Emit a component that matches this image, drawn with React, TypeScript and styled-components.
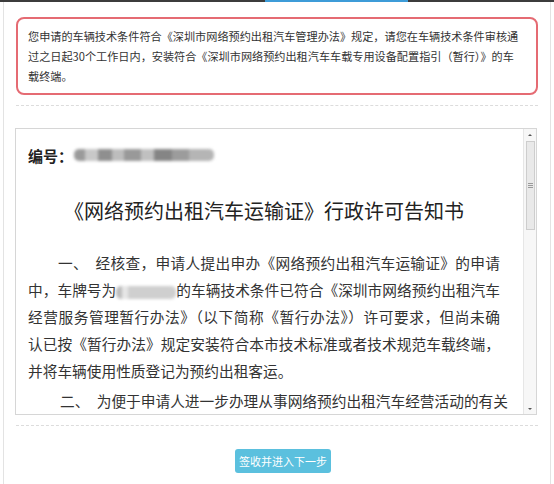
import React from "react";
import styled, { createGlobalStyle } from "styled-components";

const GlobalStyle = createGlobalStyle`
  body {
    margin: 0;
    background: #fff;
    font-family: "Noto Sans CJK SC", "Noto Sans", sans-serif;
    color: #333;
  }
`;

const Page = styled.div`
  width: 554px;
  height: 484px;
  overflow: hidden;
`;

const TopBar = styled.div`
  height: 2px;
  background: #3c3c3c;
  display: flex;
`;

const ActiveTab = styled.div`
  margin-left: 265px;
  width: 143px;
  background: #3d9cd8;
`;

const Frame = styled.div`
  margin: 0 3px;
  height: 482px;
  border-left: 1px solid #e3e3e3;
  border-right: 1px solid #e3e3e3;
  padding: 15px 12px 0;
  box-sizing: border-box;
`;

const Alert = styled.div`
  border: 2px solid #e56b73;
  border-radius: 8px;
  padding: 7px 10px;
  font-size: 11.15px;
  line-height: 20px;
  color: #333;
`;

const Line = styled.div`
  white-space: nowrap;
`;

const Divider = styled.div<{ $gap: number }>`
  margin-top: ${(p) => p.$gap}px;
  border-top: 1px dashed #dcdcdc;
`;

const DocBox = styled.div`
  margin: 22px 1px 0 -1px;
  height: 287px;
  border: 1px solid #d6d6d6;
  display: flex;
  box-sizing: border-box;
`;

const DocContent = styled.div`
  flex: 1;
  overflow: hidden;
  padding: 16px 0 0 12px;
`;

const NumberRow = styled.div`
  height: 20px;
  display: flex;
  align-items: center;
  font-family: "Liberation Serif", "Noto Sans CJK SC", serif;
  font-weight: 700;
  font-size: 15px;
  color: #222;
`;

const Blurred = styled.span<{ $w: number }>`
  display: inline-block;
  width: ${(p) => p.$w}px;
  height: 11px;
  border-radius: 5px;
  filter: blur(1.6px);
  vertical-align: middle;
`;

const NumberBlur = styled(Blurred)`
  margin-left: 1px;
  height: 12px;
  background: linear-gradient(
    90deg,
    #9a9a9a 0 8%,
    #c8c8c8 8% 17%,
    #8f8f8f 17% 27%,
    #bdbdbd 27% 36%,
    #999 36% 48%,
    #c0c0c0 48% 57%,
    #858585 57% 70%,
    #9c9c9c 70% 82%,
    #b5b5b5 82% 100%
  );
`;

const PlateBlur = styled(Blurred)`
  height: 13px;
  background: linear-gradient(90deg, #bdbdbd 0 10%, #e6e6e6 10% 20%, #cfcfcf 20% 100%);
`;

const Title = styled.div`
  margin-top: 32px;
  width: 472px;
  text-align: center;
  font-family: "Liberation Serif", "Noto Sans CJK SC", serif;
  font-size: 20px;
  line-height: 30px;
  color: #222;
`;

const Para = styled.div<{ $gap: number }>`
  margin-top: ${(p) => p.$gap}px;
  width: 472px;
  font-size: 14.7px;
  line-height: 27px;
  color: #333;
`;

const JLine = styled.div<{ $indent?: number; $last?: boolean }>`
  white-space: nowrap;
  text-indent: ${(p) => p.$indent ?? 0}px;
  text-align: ${(p) => (p.$last ? "left" : "justify")};
  text-align-last: ${(p) => (p.$last ? "left" : "justify")};
`;

const Scrollbar = styled.div`
  width: 12px;
  border-left: 1px solid #e6e6e6;
  background: #f7f7f7;
  display: flex;
  flex-direction: column;
  align-items: center;
`;

const Arrow = styled.div<{ $down?: boolean }>`
  height: 11px;
  display: flex;
  align-items: center;
  justify-content: center;
  &::before {
    content: "";
    border-left: 2px solid transparent;
    border-right: 2px solid transparent;
    ${(p) => (p.$down ? "border-top: 2px solid #555;" : "border-bottom: 2px solid #555;")}
  }
`;

const Thumb = styled.div`
  margin-top: 1px;
  width: 9px;
  height: 89px;
  background: #e9e9e9;
  border: 1px solid #cdcdcd;
  box-sizing: border-box;
  display: flex;
  flex-direction: column;
  align-items: center;
  justify-content: center;
  gap: 1px;
`;

const Grip = styled.div`
  width: 5px;
  height: 1px;
  background: #9a9a9a;
`;

const Track = styled.div`
  flex: 1;
`;

const Actions = styled.div`
  margin-top: 23px;
  padding-left: 12px;
  display: flex;
  justify-content: center;
`;

const Button = styled.button`
  width: 96px;
  height: 24px;
  border: none;
  border-radius: 3px;
  background: #5bc0de;
  color: #fff;
  font-family: "Noto Sans CJK SC", sans-serif;
  font-size: 11px;
  padding: 0;
  cursor: pointer;
`;

function App() {
  return (
    <Page>
      <GlobalStyle />
      <TopBar>
        <ActiveTab />
      </TopBar>
      <Frame>
        <Alert>
          <Line>您申请的车辆技术条件符合《深圳市网络预约出租汽车管理办法》规定，请您在车辆技术条件审核通</Line>
          <Line>过之日起30个工作日内，安装符合《深圳市网络预约出租汽车车载专用设备配置指引（暂行）》的车</Line>
          <Line>载终端。</Line>
        </Alert>
        <Divider $gap={10} />
        <DocBox>
          <DocContent>
            <NumberRow>
              编号：<NumberBlur $w={140} />
            </NumberRow>
            <Title>《网络预约出租汽车运输证》行政许可告知书</Title>
            <Para $gap={22}>
              <JLine $indent={30}>一、　经核查，申请人提出申办《网络预约出租汽车运输证》的申请</JLine>
              <JLine>
                中，车牌号为<PlateBlur $w={60} />的车辆技术条件已符合《深圳市网络预约出租汽车
              </JLine>
              <JLine>经营服务管理暂行办法》（以下简称《暂行办法》）许可要求，但尚未确</JLine>
              <JLine>认已按《暂行办法》规定安装符合本市技术标准或者技术规范车载终端，</JLine>
              <JLine $last>并将车辆使用性质登记为预约出租客运。</JLine>
            </Para>
            <Para $gap={3}>
              <JLine $indent={32} $last>二、　为便于申请人进一步办理从事网络预约出租汽车经营活动的有关</JLine>
            </Para>
          </DocContent>
          <Scrollbar>
            <Arrow />
            <Thumb>
              <Grip />
              <Grip />
              <Grip />
            </Thumb>
            <Track />
            <Arrow $down />
          </Scrollbar>
        </DocBox>
        <Divider $gap={10} />
        <Actions>
          <Button>签收并进入下一步</Button>
        </Actions>
      </Frame>
    </Page>
  );
}

export default App;
